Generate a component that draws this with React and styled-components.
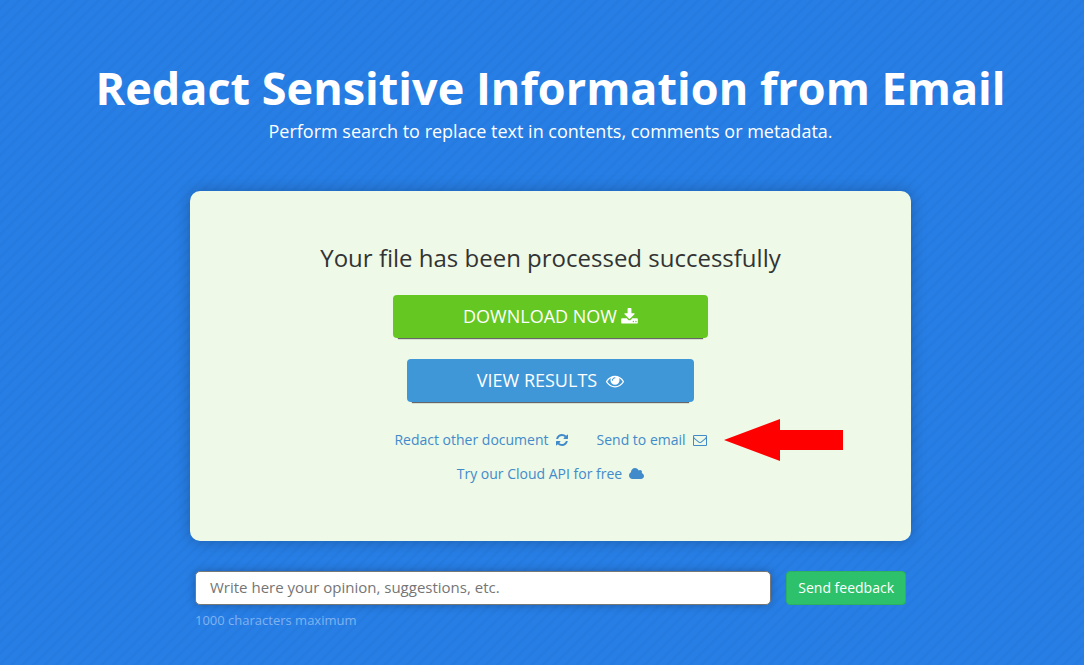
import React from "react";
import styled, { createGlobalStyle } from "styled-components";

const GlobalStyle = createGlobalStyle`
  *, *::before, *::after { box-sizing: border-box; }
  body {
    margin: 0;
    font-family: "Open Sans", "Liberation Sans", sans-serif;
    font-size: 14px;
    line-height: 20px;
    background: #277de3;
  }
`;

const Page = styled.main`
  min-height: 100vh;
  padding: 59px 0 32px 17px;
  display: flex;
  flex-direction: column;
  align-items: center;
  background: repeating-linear-gradient(
    135deg,
    #277ee5 0,
    #277ee5 4px,
    #267be0 5px,
    #267be0 7px,
    #277ee5 8px
  );
`;

const Title = styled.h1`
  margin: 0;
  color: #fff;
  font-size: 45px;
  line-height: 58px;
  font-weight: 700;
  text-align: center;
`;

const Subtitle = styled.p`
  margin: 0 0 46px;
  color: #fff;
  font-size: 18px;
  line-height: 28px;
  text-align: center;
`;

const Card = styled.section`
  width: calc(100% - 32px);
  max-width: 721px;
  padding: 50px 24px 57px;
  display: flex;
  flex-direction: column;
  align-items: center;
  background: #eef9e8;
  border-radius: 10px;
  box-shadow: 0 0 15px rgba(0, 0, 0, 0.25);
`;

const Status = styled.h2`
  margin: 0 0 20px;
  color: #333;
  font-size: 24px;
  line-height: 34px;
  font-weight: 400;
  text-align: center;
`;

const ActionButton = styled.button`
  height: 43px;
  margin-bottom: 21px;
  padding: 0 70px 2px;
  display: flex;
  align-items: center;
  gap: ${(p) => p.$gap}px;
  border: 0;
  border-radius: 4px;
  background: ${(p) => p.$color};
  box-shadow: 0 6px 1px -5px #666;
  color: #fff;
  font: inherit;
  font-size: 18px;
  cursor: pointer;

  svg { margin-top: 2px; }
`;

const Links = styled.nav`
  position: relative;
  margin-top: 7px;
  display: flex;
  flex-wrap: wrap;
  justify-content: center;
  gap: 14px 29px;
  max-width: 340px;
`;

const TextLink = styled.a`
  display: inline-flex;
  align-items: center;
  gap: 7px;
  color: #428bca;
  text-decoration: none;
`;

const Glyph = styled.svg`
  flex: none;
  display: block;
  fill: currentColor;
`;

const Pointer = styled.svg`
  position: absolute;
  left: 100%;
  top: -11px;
  margin-left: 3px;
  fill: #f00;
`;

const Feedback = styled.form`
  width: calc(100% - 32px);
  max-width: 721px;
  margin-top: 30px;
  padding: 0 5px;
  display: grid;
  grid-template-columns: 1fr auto;
  gap: 5px 15px;
`;

const Opinion = styled.input`
  width: 100%;
  min-width: 0;
  height: 34px;
  padding: 0 14px 2px;
  border: 1px solid #777;
  border-radius: 5px;
  background: #fff;
  box-shadow: 0 0 10px rgba(0, 0, 0, 0.25);
  color: #333;
  font: inherit;
  font-size: 15px;
  &::placeholder { color: #757575; opacity: 1; }
`;

const SendButton = styled.button`
  height: 34px;
  padding: 0 11px;
  border: 1px solid #2bb15f;
  border-radius: 4px;
  background: #2cc16a;
  color: #fff;
  font: inherit;
  cursor: pointer;
`;

const Hint = styled.label`
  color: #80b3f0;
  font-size: 13px;
`;

const icons = {
  download: {
    box: "64 0 1664 1792",
    d: "M1344 1344q0-26-19-45t-45-19-45 19-19 45 19 45 45 19 45-19 19-45zm256 0q0-26-19-45t-45-19-45 19-19 45 19 45 45 19 45-19 19-45zm128-224v320q0 40-28 68t-68 28h-1472q-40 0-68-28t-28-68v-320q0-40 28-68t68-28h465l135 136q58 56 136 56t136-56l136-136h464q40 0 68 28t28 68zm-325-569q17 41-14 70l-448 448q-18 19-45 19t-45-19l-448-448q-31-29-14-70 17-39 59-39h256v-448q0-26 19-45t45-19h256q26 0 45 19t19 45v448h256q42 0 59 39z",
  },
  eye: {
    box: "0 0 1792 1792",
    d: "M1664 960q-152-236-381-353 61 104 61 225 0 185-131.5 316.5t-316.5 131.5-316.5-131.5-131.5-316.5q0-121 61-225-229 117-381 353 133 205 333.5 326.5t434.5 121.5 434.5-121.5 333.5-326.5zm-720-384q0-20-14-34t-34-14q-125 0-214.5 89.5t-89.5 214.5q0 20 14 34t34 14 34-14 14-34q0-86 61-147t147-61q20 0 34-14t14-34zm848 384q0 34-20 69-140 230-376.5 368.5t-499.5 138.5-499.5-139-376.5-368q-20-35-20-69t20-69q140-229 376.5-368t499.5-139 499.5 139 376.5 368q20 35 20 69z",
  },
  refresh: {
    box: "128 0 1536 1792",
    d: "M1639 1056q0 5-1 7-64 268-268 434.5t-478 166.5q-146 0-282.5-55t-243.5-157l-129 129q-19 19-45 19t-45-19-19-45v-448q0-26 19-45t45-19h448q26 0 45 19t19 45-19 45l-137 137q71 66 161 102t187 36q134 0 250-65t186-179q11-17 53-117 8-23 30-23h192q13 0 22.5 9.5t9.5 22.5zm25-800v448q0 26-19 45t-45 19h-448q-26 0-45-19t-19-45 19-45l138-138q-148-137-349-137-134 0-250 65t-186 179q-11 17-53 117-8 23-30 23h-199q-13 0-22.5-9.5t-9.5-22.5v-7q65-268 270-434.5t480-166.5q146 0 284 55.5t245 156.5l130-129q19-19 45-19t45 19 19 45z",
  },
  envelope: {
    box: "0 0 1792 1792",
    d: "M1664 1504v-768q-32 36-69 66-268 206-426 338-51 43-83 67t-86.5 48.5-102.5 24.5h-2q-48 0-102.5-24.5t-86.5-48.5-83-67q-158-132-426-338-37-30-69-66v768q0 13 9.5 22.5t22.5 9.5h1472q13 0 22.5-9.5t9.5-22.5zm0-1051v-24.5l-.5-13-3-12.5-5.5-9-9-7.5-14-2.5h-1472q-13 0-22.5 9.5t-9.5 22.5q0 168 147 284 193 152 401 317 6 5 35 29.5t46 37.5 44.5 31.5 50.5 27.5 43 9h2q20 0 43-9t50.5-27.5 44.5-31.5 46-37.5 35-29.5q208-165 401-317 54-43 100.5-115.5t46.5-131.5zm128-37v1088q0 66-47 113t-113 47h-1472q-66 0-113-47t-47-113v-1088q0-66 47-113t113-47h1472q66 0 113 47t47 113z",
  },
  cloud: {
    box: "64 0 1920 1792",
    d: "M1984 1152q0 159-112.5 271.5t-271.5 112.5h-1088q-185 0-316.5-131.5t-131.5-316.5q0-132 71-241.5t187-163.5q-2-28-2-43 0-212 150-362t362-150q158 0 286.5 88t187.5 230q70-62 166-62 106 0 181 75t75 181q0 75-41 138 129 30 213 134.5t84 239.5z",
  },
};

function Icon({ name, width, height }) {
  const { box, d } = icons[name];
  return (
    <Glyph viewBox={box} width={width} height={height} aria-hidden="true">
      <path d={d} />
    </Glyph>
  );
}

export default function App() {
  return (
    <>
      <GlobalStyle />
      <Page>
        <Title>Redact Sensitive Information from Email</Title>
        <Subtitle>Perform search to replace text in contents, comments or metadata.</Subtitle>
        <Card>
          <Status>Your file has been processed successfully</Status>
          <ActionButton type="button" $color="#65c721" $gap={4}>
            DOWNLOAD NOW <Icon name="download" width={17} height={18} />
          </ActionButton>
          <ActionButton type="button" $color="#3f97d7" $gap={9}>
            VIEW RESULTS <Icon name="eye" width={18} height={18} />
          </ActionButton>
          <Links>
            <TextLink href="#redact">
              Redact other document <Icon name="refresh" width={12} height={14} />
            </TextLink>
            <TextLink href="#email">
              Send to email <Icon name="envelope" width={14} height={14} />
            </TextLink>
            <TextLink href="#cloud">
              Try our Cloud API for free <Icon name="cloud" width={15} height={14} />
            </TextLink>
            <Pointer width="119" height="42" viewBox="0 0 119 42" aria-hidden="true">
              <path d="M0 21L56 0V11H119V31H56V42Z" />
            </Pointer>
          </Links>
        </Card>
        <Feedback onSubmit={(e) => e.preventDefault()}>
          <Opinion
            id="opinion"
            type="text"
            maxLength={1000}
            placeholder="Write here your opinion, suggestions, etc."
          />
          <SendButton type="submit">Send feedback</SendButton>
          <Hint htmlFor="opinion">1000 characters maximum</Hint>
        </Feedback>
      </Page>
    </>
  );
}
